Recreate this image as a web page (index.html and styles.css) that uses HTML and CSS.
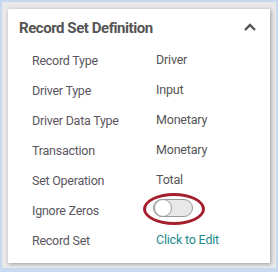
FILE: index.html
```html
<!DOCTYPE html>
<html>
<head>
<meta charset="utf-8">
<link rel="stylesheet" href="styles.css">
</head>
<body>
<div class="frame">
  <div class="card">
    <div class="header">
      <span class="title">Record Set Definition</span>
      <svg class="chevron" width="12" height="8" viewBox="0 0 12 8"><path d="M1 7 L6 2 L11 7" fill="none" stroke="#555" stroke-width="2.4"/></svg>
    </div>
    <div class="rows">
      <div class="row"><span class="label">Record Type</span><span class="value">Driver</span></div>
      <div class="row"><span class="label">Driver Type</span><span class="value">Input</span></div>
      <div class="row"><span class="label">Driver Data Type</span><span class="value">Monetary</span></div>
      <div class="row"><span class="label">Transaction</span><span class="value">Monetary</span></div>
      <div class="row"><span class="label">Set Operation</span><span class="value">Total</span></div>
      <div class="row"><span class="label">Ignore Zeros</span><span class="toggle"><span class="knob"></span><span class="mark"></span></span></div>
      <div class="row"><span class="label">Record Set</span><span class="value link">Click to Edit</span></div>
    </div>
  </div>
</div>
</body>
</html>
```
FILE: styles.css
```css
html, body { margin: 0; padding: 0; }
body {
  background: #c6d9f1;
  width: 278px;
  height: 272px;
  font-family: Roboto, "Liberation Sans", sans-serif;
  overflow: hidden;
}
.frame {
  margin: 2px;
  width: 274px;
  height: 266px;
  box-sizing: border-box;
  padding: 7px 6px 5px 6px;
  background: #e9e9e9;
}
.card {
  background: #fff;
  height: 254px;
  box-shadow: 1px 1px 4px rgba(0,0,0,0.35);
  padding-top: 9px;
  box-sizing: border-box;
}
.header {
  display: flex;
  align-items: center;
  justify-content: space-between;
  height: 20px;
  padding: 0 14px 0 11px;
}
.title {
  font-weight: 700;
  font-size: 15px;
  letter-spacing: -0.45px;
  line-height: 20px;
  color: #555;
}
.chevron { margin-top: -3px; }
.rows {
  margin-top: 8px;
  padding-left: 24px;
}
.row {
  display: flex;
  align-items: flex-start;
  height: 30px;
}
.label {
  width: 124px;
  font-size: 12.5px;
  letter-spacing: -0.25px;
  line-height: 30px;
  color: #5b5660;
}
.value {
  font-size: 12.5px;
  letter-spacing: -0.2px;
  line-height: 28px;
  color: #555;
}
.link { color: #1b8a8c; }
.toggle {
  position: relative;
  margin-top: 3px;
  margin-left: -3px;
  width: 40px;
  height: 18px;
  box-sizing: border-box;
  border: 1px solid #9a9a9a;
  border-radius: 9px;
  background: #e8e8e8;
}
.knob {
  position: absolute;
  left: 0;
  top: -1px;
  width: 18px;
  height: 18px;
  box-sizing: border-box;
  border: 1px solid #9a9a9a;
  border-radius: 50%;
  background: #fff;
}
.mark {
  position: absolute;
  left: -11px;
  top: -7px;
  width: 56px;
  height: 26px;
  border: 3px solid #a51e2c;
  border-radius: 50%;
}
```
